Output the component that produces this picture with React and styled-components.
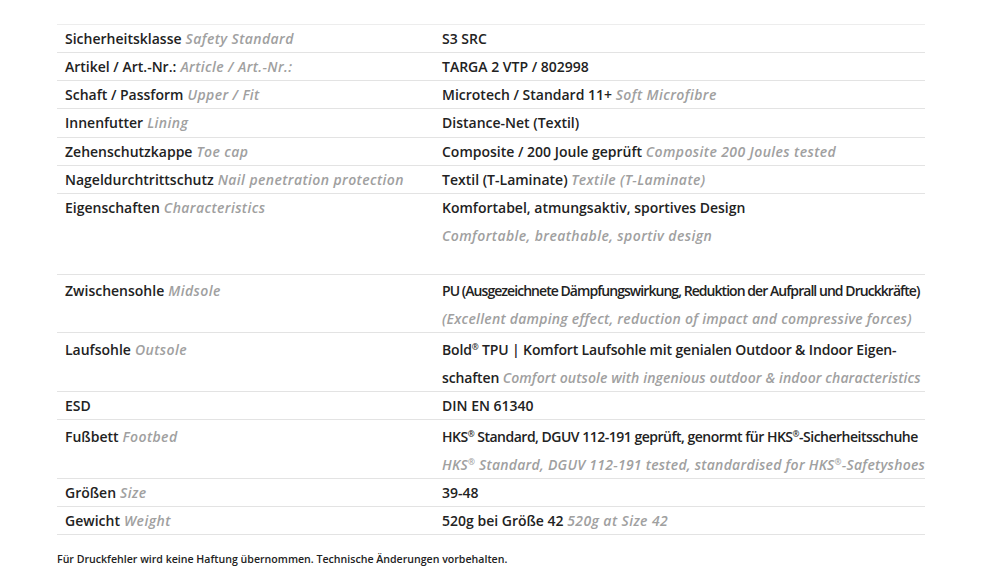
import styled, { createGlobalStyle } from "styled-components";

const GlobalStyle = createGlobalStyle`
  * { box-sizing: border-box; }
  body {
    margin: 0;
    background: #fff;
    font-family: "Open Sans", "Liberation Sans", sans-serif;
    color: #222;
  }
`;

const R = () => <S.Reg>®</S.Reg>;

const specs = [
  { de: "Sicherheitsklasse", en: "Safety Standard", value: [["S3 SRC"]] },
  { de: "Artikel / Art.-Nr.:", en: "Article / Art.-Nr.:", value: [["TARGA 2 VTP / 802998"]] },
  { de: "Schaft / Passform", en: "Upper / Fit", value: [["Microtech / Standard 11+", "Soft Microfibre"]] },
  { de: "Innenfutter", en: "Lining", value: [["Distance-Net (Textil)"]] },
  { de: "Zehenschutzkappe", en: "Toe cap", value: [["Composite / 200 Joule geprüft", "Composite 200 Joules tested"]] },
  { de: "Nageldurchtrittschutz", en: "Nail penetration protection", value: [["Textil (T-Laminate)", "Textile (T-Laminate)"]] },
  {
    de: "Eigenschaften",
    en: "Characteristics",
    trailingBlank: true,
    value: [["Komfortabel, atmungsaktiv, sportives Design"], [null, "Comfortable, breathable, sportiv design"]],
  },
  {
    de: "Zwischensohle",
    en: "Midsole",
    tight: -0.95,
    enSpacing: 0.25,
    value: [
      ["PU (Ausgezeichnete Dämpfungswirkung, Reduktion der Aufprall und Druckkräfte)"],
      [null, "(Excellent damping effect, reduction of impact and compressive forces)"],
    ],
  },
  {
    de: "Laufsohle",
    en: "Outsole",
    tight: -0.15,
    enSpacing: 0.1,
    value: [
      [<>Bold<R /> TPU | Komfort Laufsohle mit genialen Outdoor &amp; Indoor Eigen-</>],
      ["schaften", "Comfort outsole with ingenious outdoor & indoor characteristics"],
    ],
  },
  { de: "ESD", value: [["DIN EN 61340"]] },
  {
    de: "Fußbett",
    en: "Footbed",
    tight: -0.5,
    enSpacing: 0.25,
    value: [
      [<>HKS<R /> Standard, DGUV 112-191 geprüft, genormt für HKS<R />-Sicherheitsschuhe</>],
      [null, <>HKS<R /> Standard, DGUV 112-191 tested, standardised for HKS<R />-Safetyshoes</>],
    ],
  },
  { de: "Größen", en: "Size", value: [["39-48"]] },
  { de: "Gewicht", en: "Weight", value: [["520g bei Größe 42", "520g at Size 42"]] },
];

const App = () => (
  <>
    <GlobalStyle />
    <S.Page>
      <S.Table>
        {specs.map((row) => {
          const multi = row.value.length > 1 && !row.trailingBlank;
          return (
            <S.Row key={row.de}>
              <S.Cell $multi={multi}>
                <S.Line $multi={multi || row.trailingBlank}>
                  <S.Strong>{row.de}</S.Strong>
                  {row.en && <S.Translation> {row.en}</S.Translation>}
                </S.Line>
              </S.Cell>
              <S.Cell $multi={multi}>
                {row.value.map(([de, en], i) => (
                  <S.Line key={i} $spacing={row.tight} $multi={row.value.length > 1}>
                    {de && <S.Strong>{de}</S.Strong>}
                    {de && en && " "}
                    {en && <S.Translation $spacing={row.enSpacing}>{en}</S.Translation>}
                  </S.Line>
                ))}
                {row.trailingBlank && <S.Blank />}
              </S.Cell>
            </S.Row>
          );
        })}
      </S.Table>
      <S.Note>Für Druckfehler wird keine Haftung übernommen. Technische Änderungen vorbehalten.</S.Note>
    </S.Page>
  </>
);

export default App;

const S = {
  Page: styled.div`
    padding: 24px 60px 0 57px;
  `,
  Table: styled.div`
    display: flex;
    flex-direction: column;
    border-top: 1px solid #ededed;
  `,
  Row: styled.div`
    display: grid;
    grid-template-columns: 377px 1fr;
    border-bottom: 1px solid #e3e3e3;
  `,
  Cell: styled.div`
    display: flex;
    flex-direction: column;
    gap: 1px;
    padding: ${({ $multi }) => ($multi ? "2.5px 0 0 8px" : "0 0 0 8px")};
  `,
  Line: styled.div`
    font-size: 14px;
    line-height: ${({ $multi }) => ($multi ? "27px" : "27.15px")};
    white-space: nowrap;
    letter-spacing: ${({ $spacing }) => ($spacing ? `${$spacing}px` : "0")};
  `,
  Blank: styled.div`
    height: 24px;
  `,
  Strong: styled.span`
    font-weight: 600;
    color: #222;
  `,
  Translation: styled.span`
    font-style: italic;
    font-weight: 600;
    color: #a0a0a0;
    letter-spacing: ${({ $spacing }) => ($spacing !== undefined ? `${$spacing}px` : "0.4px")};
  `,
  Reg: styled.span`
    font-size: 0.6em;
    vertical-align: 0.55em;
    line-height: 0;
  `,
  Note: styled.p`
    margin: 17px 0 0;
    font-size: 10.6px;
    line-height: 14px;
    font-weight: 600;
    color: #222;
  `,
};
